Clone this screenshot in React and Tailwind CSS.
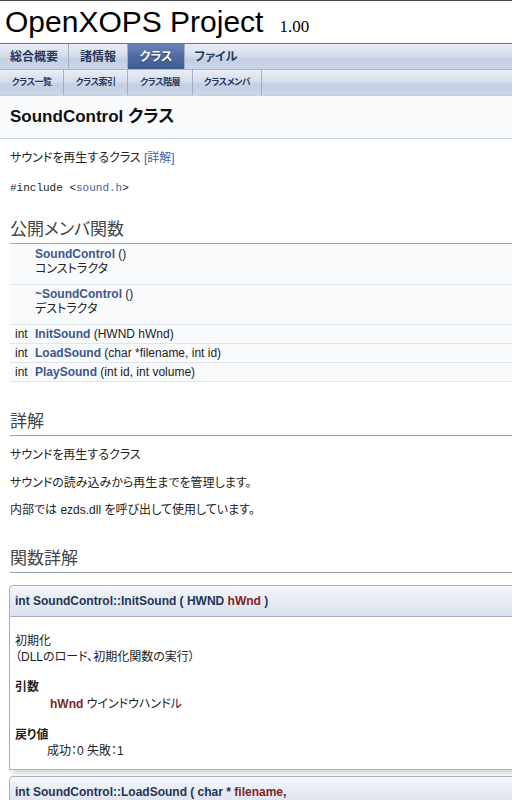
import React from 'react';

const TABS = [
  { label: '総合概要', w: 'w-[69px]' },
  { label: '諸情報', w: 'w-[59px]' },
  { label: 'クラス', w: 'w-[57px]', active: true },
  { label: 'ファイル', w: 'w-[62px]', last: true },
];

const SUBTABS = [
  { label: 'クラス一覧', w: 'w-[64px]' },
  { label: 'クラス索引', w: 'w-[64px]' },
  { label: 'クラス階層', w: 'w-[65px]' },
  { label: 'クラスメンバ', w: 'w-[69px]' },
];

const tabBg = 'bg-[linear-gradient(to_bottom,#e9edf5_0%,#d6deed_45%,#c4cfe4_60%,#ccd6e9_100%)]';
const protoBg = 'bg-[linear-gradient(to_bottom,#f5f7fb_0%,#e6ebf4_50%,#dae1ef_100%)]';

const GroupHeader = ({ children, className = '' }) => (
  <h2 className={`-mr-[10px] text-[17px] leading-[24px] font-normal text-[#444] border-b border-[#9aa3a8] pb-[1px] ${className}`}>
    {children}
  </h2>
);

const MemberRow = ({ type, name, args, brief }) => (
  <div className="flex bg-[#f9fafc] border-b border-[#dee4f0]">
    <div className="w-[25px] pl-[5px] pt-[3px] leading-[13px] shrink-0">{type}</div>
    <div className="flex-1 pt-[3px] pb-[2px] leading-[13px]">
      <div>
        <span className="font-bold text-[#3d578c]">{name}</span> {args}
      </div>
      {brief && <div className="mt-[2px] mb-[6px] leading-[13px]">{brief}</div>}
    </div>
  </div>
);

export default function App() {
  return (
    <div className="w-[512px] h-[800px] overflow-hidden bg-white text-[12px] text-[#222] font-['Liberation_Sans','Noto_Sans_CJK_JP',sans-serif] [font-feature-settings:'palt']">
      {/* title area */}
      <div className="h-[44px] border-t border-[#4a4a4a] border-b border-b-[#5373b4] flex items-baseline pl-[5px] pt-[4px]">
        <span className="text-[30px] leading-[34px] text-black">OpenXOPS Project</span>
        <span className="ml-[16px] text-[17px] font-['Liberation_Serif',serif] text-black">1.00</span>
      </div>

      {/* main tabs */}
      <div className={`flex h-[26px] ${tabBg} border-b border-[#a9b6cf]`}>
        {TABS.map(t => (
          <div
            key={t.label}
            className={`${t.w} flex items-center justify-center text-[12px] font-bold ${
              t.active
                ? 'bg-[linear-gradient(to_bottom,#6a86ba_0%,#4d6ba3_50%,#3f5d95_100%)] text-white [text-shadow:0_1px_1px_rgba(0,0,0,0.5)]'
                : 'text-[#283a5d]'
            } ${t.last ? '' : 'border-r border-[#a2afc9]'}`}
          >
            {t.label}
          </div>
        ))}
      </div>

      {/* sub tabs */}
      <div className={`flex h-[26px] ${tabBg} border-b border-[#c4cfe5]`}>
        {SUBTABS.map(t => (
          <div
            key={t.label}
            className={`${t.w} flex items-center justify-center text-[9px] font-bold text-[#283a5d] border-r border-[#a2afc9] tracking-[-0.5px]`}
          >
            {t.label}
          </div>
        ))}
      </div>

      {/* header */}
      <div className="h-[43px] bg-[#f9fafc] border-b border-[#c4cfe5] flex items-center px-[10px]">
        <span className="text-[17px] font-bold text-[#111]">SoundControl クラス</span>
      </div>

      <div className="px-[10px]">
        <p className="mt-[12px] leading-[14px]">
          サウンドを再生するクラス <span className="text-[#4665a2]">[詳解]</span>
        </p>
        <p className="mt-[16px] leading-[14px] text-[11px] font-['Liberation_Mono',monospace]">
          #include &lt;<span className="text-[#4665a2]">sound.h</span>&gt;
        </p>

        <GroupHeader className="mt-[23px]">公開メンバ関数</GroupHeader>

        <div className="-mr-[10px] mt-[1px]">
          <MemberRow type="" name="SoundControl" args="()" brief="コンストラクタ" />
          <MemberRow type="" name="~SoundControl" args="()" brief="デストラクタ" />
          <MemberRow type="int" name="InitSound" args="(HWND hWnd)" />
          <MemberRow type="int" name="LoadSound" args="(char *filename, int id)" />
          <MemberRow type="int" name="PlaySound" args="(int id, int volume)" />
        </div>

        <GroupHeader className="mt-[28px]">詳解</GroupHeader>
        <p className="mt-[12px] leading-[14px]">サウンドを再生するクラス</p>
        <p className="mt-[14px] leading-[14px]">サウンドの読み込みから再生までを管理します。</p>
        <p className="mt-[13px] leading-[14px]">内部では ezds.dll を呼び出して使用しています。</p>

        <GroupHeader className="mt-[30px]">関数詳解</GroupHeader>

        {/* InitSound */}
        <div className="mt-[12px] -ml-[1px] -mr-[20px] shadow-[3px_4px_5px_rgba(0,0,0,0.15)] rounded-t-[4px]">
          <div className={`h-[32px] border border-[#a8b0c0] rounded-t-[4px] ${protoBg} flex items-center px-[5px] font-bold text-[#253555]`}>
            int SoundControl::InitSound ( HWND&nbsp; <span className="text-[#802525]">hWnd</span>&nbsp;)
          </div>
          <div className="border border-t-0 border-[#a8b0c0] bg-white px-[5px] pt-[16px] pb-[10px] leading-[16px]">
            <p>初期化</p>
            <p>（DLLのロード、初期化関数の実行）</p>
            <p className="mt-[14px] font-bold">引数</p>
            <p className="pl-[35px] mt-[1px]">
              <span className="font-bold text-[#802525]">hWnd</span> ウインドウハンドル
            </p>
            <p className="mt-[15px] font-bold">戻り値</p>
            <p className="pl-[32px]">成功：0 失敗：1</p>
          </div>
        </div>

        {/* LoadSound */}
        <div className="mt-[6px] -ml-[1px] -mr-[20px]">
          <div className={`h-[32px] border border-[#a8b0c0] rounded-t-[4px] ${protoBg} flex items-center px-[5px] font-bold text-[#253555]`}>
            int SoundControl::LoadSound ( char *&nbsp; <span className="text-[#802525]">filename</span>,
          </div>
        </div>
      </div>
    </div>
  );
}
